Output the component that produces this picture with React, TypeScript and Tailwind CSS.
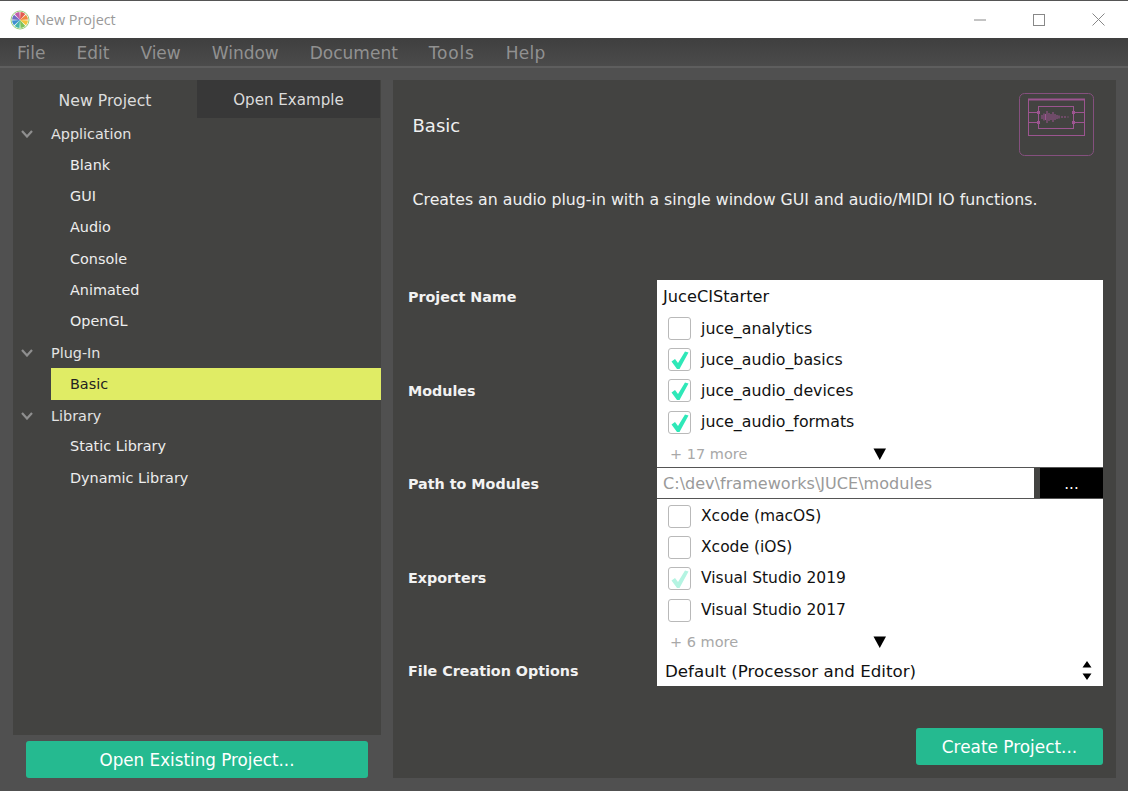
import React from "react";

const font = { fontFamily: '"DejaVu Sans", Verdana, sans-serif' };

function Logo() {
  const cols = ["#e25b4f", "#f08a3c", "#f5c33b", "#7cc35a", "#45b6a8", "#3f8fd0", "#6d6fc4", "#c25fa8"];
  return (
    <svg width="20" height="20" viewBox="0 0 20 20" className="ml-[10px] mr-[5px] shrink-0">
      <circle cx="10" cy="10" r="9" fill="#fff" stroke="#9ad07c" strokeWidth="1" />
      {cols.map((c, i) => {
        const a = (i * Math.PI) / 4 - Math.PI / 2 + 0.06;
        const b = ((i + 1) * Math.PI) / 4 - Math.PI / 2 - 0.06;
        return (
          <path
            key={c}
            d={`M10 10 L${10 + 8 * Math.cos(a)} ${10 + 8 * Math.sin(a)} A8 8 0 0 1 ${10 + 8 * Math.cos(b)} ${10 + 8 * Math.sin(b)} Z`}
            fill={c}
          />
        );
      })}
    </svg>
  );
}

function Chevron() {
  return (
    <svg width="12" height="8" viewBox="0 0 12 8" className="absolute left-[8px] top-[12px]">
      <path d="M1 1 L6 6.5 L11 1" fill="none" stroke="#8f8f8f" strokeWidth="2.2" />
    </svg>
  );
}

function Group({ label }: { label: string }) {
  return (
    <div className="relative h-[31.3px] pl-[38px] pt-[2px] flex items-center text-[#e4e4e4]">
      <Chevron />
      {label}
    </div>
  );
}

function Item({ label, selected }: { label: string; selected?: boolean }) {
  return (
    <div
      className={
        "ml-[38px] h-[31.3px] pl-[19px] pt-[1px] flex items-center " +
        (selected ? "bg-[#e0ec65] text-[#222222]" : "text-[#eeeeee]")
      }
    >
      {label}
    </div>
  );
}

function Check({ label, state }: { label: string; state?: "on" | "dim" }) {
  const col = state === "on" ? "#2ee8b8" : "#b4f4e2";
  return (
    <div className="h-[31.2px] flex items-center pl-[11px] text-[#111111]">
      <div className="relative w-[23px] h-[23px] rounded-[3px] border border-[#b9b9b9] bg-white mr-[10px] shrink-0">
        {state && (
          <svg width="22" height="22" viewBox="0 0 22 22" className="absolute left-0 top-0">
            <path d="M2.5 12.5 L6 10 L9 14 L16 2.5 L19.5 3.5 L10.5 20 L8 20 Z" fill={col} />
          </svg>
        )}
      </div>
      <span>{label}</span>
    </div>
  );
}

function More({ label }: { label: string }) {
  return (
    <div className="relative h-[30px] pl-[13px] pt-[4px] flex items-center text-[#a8a8a8] text-[14.5px]">
      {label}
      <svg width="14" height="12" viewBox="0 0 14 12" className="absolute left-[216px] top-[10px]">
        <path d="M0.5 0.5 H13 L6.75 12 Z" fill="#000" />
      </svg>
    </div>
  );
}

function Label({ children }: { children: React.ReactNode }) {
  return (
    <div className="pl-[15px] pt-[4px] font-bold text-[#f2f2f2] text-[14.3px] flex items-center">{children}</div>
  );
}

function PluginIcon() {
  const c = "#9c5590";
  return (
    <svg width="76" height="64" viewBox="0 0 76 64" className="shrink-0" fill="none">
      <rect x="0.5" y="0.5" width="74" height="62" rx="5" stroke="#85507e" />
      <rect x="9.5" y="6.5" width="56" height="36" stroke={c} />
      <path d="M9 6.5 H66" stroke={c} strokeWidth="2" />
      <rect x="19.5" y="13.5" width="35" height="22" stroke={c} />
      <path d="M9.5 19.5 H19.5 M9.5 29.5 H19.5 M54.5 19.5 H65.5 M54.5 29.5 H65.5" stroke={c} />
      <path d="M18 18 h3 v3 h-3 Z M18 28 h3 v3 h-3 Z M53 18 h3 v3 h-3 Z M53 28 h3 v3 h-3 Z" fill={c} />
      <path
        d="M23 22 V26 M25 20.5 V27.5 M26.5 21 V27 M28 18 V30 M30 20 V28 M32 21 V27 M34 19 V29 M36 21 V27 M38 22 V26 M40 22.5 V25.5 M43 23 V25 M46 23 V25 M49 23.5 V24.5"
        stroke={c}
      />
    </svg>
  );
}

export default function App() {
  return (
    <div className="w-[1128px] h-[791px] overflow-hidden bg-[#505050] flex flex-col text-[14.4px]" style={font}>
      <div className="h-[38px] bg-white border-t border-[#555555] flex items-center shrink-0">
        <Logo />
        <span className="text-[#9a9a9a] text-[14.4px]" style={{ fontFamily: '"Open Sans", "DejaVu Sans", sans-serif' }}>
          New Project
        </span>
        <div className="ml-auto flex items-center text-[#777777]">
          <div className="w-[59px] flex justify-center">
            <svg width="12" height="2" viewBox="0 0 12 2"><path d="M0 1 H12" stroke="#888" /></svg>
          </div>
          <div className="w-[59px] flex justify-center">
            <svg width="12" height="12" viewBox="0 0 12 12"><rect x="0.5" y="0.5" width="11" height="11" fill="none" stroke="#888" /></svg>
          </div>
          <div className="w-[60px] flex justify-center">
            <svg width="13" height="13" viewBox="0 0 13 13"><path d="M0.5 0.5 L12.5 12.5 M12.5 0.5 L0.5 12.5" stroke="#888" /></svg>
          </div>
        </div>
      </div>

      <div className="h-[30px] bg-gradient-to-b from-[#3f3f3f] to-[#4b4b4b] border-b-2 border-[#5e5e5e] flex items-center pl-[17px] pt-[3px] gap-[31px] text-[#919191] text-[17px] shrink-0">
        {["File", "Edit", "View", "Window", "Document"].map((m) => (
          <span key={m}>{m}</span>
        ))}
        <span className="tracking-[0.8px]">Tools</span>
        <span className="tracking-[0.3px]">Help</span>
      </div>

      <div className="flex-1 flex pt-[12px] pb-[13px] pl-[13px] pr-[12px] gap-[12px] min-h-0">
        <div className="w-[368px] flex flex-col shrink-0">
          <div className="h-[655px] bg-[#434341] flex flex-col">
            <div className="h-[38px] flex shrink-0 text-[#dcdcdc]">
              <div className="w-[184px] pt-[3px] text-[15.7px] flex items-center justify-center">New Project</div>
              <div className="w-[183px] pt-[3px] text-[15.1px] bg-[#383838] flex items-center justify-center">Open Example</div>
            </div>
            <Group label="Application" />
            <Item label="Blank" />
            <Item label="GUI" />
            <Item label="Audio" />
            <Item label="Console" />
            <Item label="Animated" />
            <Item label="OpenGL" />
            <Group label="Plug-In" />
            <Item label="Basic" selected />
            <Group label="Library" />
            <Item label="Static Library" />
            <Item label="Dynamic Library" />
          </div>
          <div className="mt-[6px] mx-[13px] h-[37px] pt-[3px] rounded-[3px] bg-[#25ba90] flex items-center justify-center text-white text-[16.75px]">
            Open Existing Project...
          </div>
        </div>

        <div className="flex-1 bg-[#434341] flex flex-col relative">
          <div className="flex justify-between pl-[19.5px] pr-[21px] pt-[13px] h-[100px]">
            <div className="text-[#f0f0f0] text-[18px] pt-[21px] leading-[24px]">Basic</div>
            <PluginIcon />
          </div>
          <div className="pl-[19.5px] text-[#f0f0f0] text-[15.78px] leading-[20px] h-[100px] pt-[10px]">
            Creates an audio plug-in with a single window GUI and audio/MIDI IO functions.
          </div>

          <div className="grid grid-cols-[264px_446px] grid-rows-[32px_155px_32px_155px_32px] h-[406px]">
            <Label>Project Name</Label>
            <div className="bg-white pl-[6px] pt-[3px] flex items-center text-[#111111] text-[16.2px]">JuceCIStarter</div>

            <Label>Modules</Label>
            <div className="bg-white pt-[1px] overflow-hidden text-[15.8px]">
              <Check label="juce_analytics" />
              <Check label="juce_audio_basics" state="on" />
              <Check label="juce_audio_devices" state="on" />
              <Check label="juce_audio_formats" state="on" />
              <More label="+ 17 more" />
            </div>

            <Label>Path to Modules</Label>
            <div className="flex border-y border-[#555555] bg-white">
              <div className="w-[377px] pl-[6px] pt-[3px] flex items-center text-[#9a9a9a] text-[16.07px]">C:\dev\frameworks\JUCE\modules</div>
              <div className="w-[6px] bg-[#434341]"></div>
              <div className="flex-1 bg-black text-white flex items-center justify-center pt-[2px] text-[15px]">...</div>
            </div>

            <Label>Exporters</Label>
            <div className="bg-white pt-[2px] overflow-hidden text-[15.5px]">
              <Check label="Xcode (macOS)" />
              <Check label="Xcode (iOS)" />
              <Check label="Visual Studio 2019" state="dim" />
              <Check label="Visual Studio 2017" />
              <More label="+ 6 more" />
            </div>

            <Label>File Creation Options</Label>
            <div className="relative bg-white pl-[8px] pt-[3px] flex items-center text-[#111111] text-[16.7px]">
              Default (Processor and Editor)
              <svg width="10" height="19" viewBox="0 0 10 19" className="absolute right-[11px] top-[7px]">
                <path d="M5 0 L9.5 6.5 H0.5 Z M0.5 12.5 H9.5 L5 19 Z" fill="#000" />
              </svg>
            </div>
          </div>

          <div className="mt-[42px] ml-[523px] w-[187px] h-[37px] pt-[3px] rounded-[3px] bg-[#25ba90] flex items-center justify-center text-white text-[16.9px]">
            Create Project...
          </div>
        </div>
      </div>
    </div>
  );
}
